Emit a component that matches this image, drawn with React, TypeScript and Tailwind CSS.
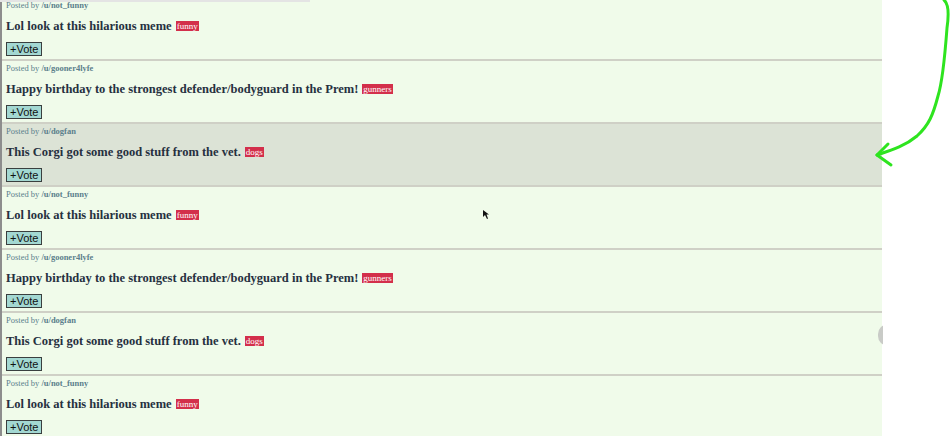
import React from 'react';

type Post = { user: string; title: string; tag: string; hover?: boolean };

const posts: Post[] = [
  { user: 'not_funny', title: 'Lol look at this hilarious meme', tag: 'funny' },
  { user: 'gooner4lyfe', title: 'Happy birthday to the strongest defender/bodyguard in the Prem!', tag: 'gunners' },
  { user: 'dogfan', title: 'This Corgi got some good stuff from the vet.', tag: 'dogs', hover: true },
  { user: 'not_funny', title: 'Lol look at this hilarious meme', tag: 'funny' },
  { user: 'gooner4lyfe', title: 'Happy birthday to the strongest defender/bodyguard in the Prem!', tag: 'gunners' },
  { user: 'dogfan', title: 'This Corgi got some good stuff from the vet.', tag: 'dogs' },
  { user: 'not_funny', title: 'Lol look at this hilarious meme', tag: 'funny' },
];

const PostRow = ({ post }: { post: Post }) => {
  return (
    <div
      className={`pl-[4px] pt-[1px] pb-[3px] border-b-2 border-[#cfd0c6] ${
        post.hover ? 'bg-[#dce3d6]' : 'bg-[#f0fbea]'
      }`}
    >
      <div className="text-[8.5px] leading-[12px] text-[#5b7f8c] font-['Liberation_Serif',serif]">
        Posted by <span className="font-bold">/u/{post.user}</span>
      </div>
      <div className="mt-[7px] flex items-center gap-[4px] text-[12.5px] leading-[16px] font-bold text-[#26303f] font-['Liberation_Serif',serif]">
        <span>{post.title}</span>
        <span className="bg-[#d32f4b] text-white text-[9px] leading-[10px] px-[1px] font-normal">{post.tag}</span>
      </div>
      <button className="mt-[8px] h-[14px] px-[3px] flex items-center bg-[#a3d8d2] border border-[#3a3f3f] text-[11px] leading-none text-[#111] font-['Liberation_Sans',sans-serif]">
        +Vote
      </button>
    </div>
  );
};

const App = () => {
  return (
    <div className="relative w-[950px] h-[436px] overflow-hidden bg-white">
      <div className="w-[882px] -mt-[2px] border-l-2 border-[#8d8d8d]">
        {posts.map((p, i) => (
          <PostRow key={i} post={p} />
        ))}
      </div>

      {/* top strip of browser chrome */}
      <div className="absolute left-0 top-0 w-[310px] h-[2px] bg-[#e4e4e4]" />

      {/* scroll knob on the edge */}
      <div className="absolute left-[878px] top-[324px] w-[20px] h-[22px] rounded-full bg-[#c9cbc7]" />
      <div className="absolute left-[883px] top-[310px] w-[67px] h-[60px] bg-white" />

      {/* hand-drawn arrow */}
      <svg className="absolute left-0 top-0" width="950" height="436" viewBox="0 0 950 436" fill="none">
        <path
          d="M944 0 C949 4 949 14 947 28 C945 55 943 80 938 96 C933 115 929 125 917 136 C905 146 892 150 877 155"
          stroke="#2ee41f"
          strokeWidth="3"
          strokeLinecap="round"
        />
        <path d="M877 155 L888 144 M877 155 L891 165" stroke="#2ee41f" strokeWidth="3" strokeLinecap="round" />
      </svg>

      {/* mouse cursor */}
      <svg className="absolute left-[482px] top-[209px]" width="8" height="11" viewBox="0 0 8 11">
        <path d="M1 1 L1 8 L3 6 L5 10 L6 9.5 L4.5 5.5 L7 5.5 Z" fill="#111" />
      </svg>
    </div>
  );
};

export default App;
